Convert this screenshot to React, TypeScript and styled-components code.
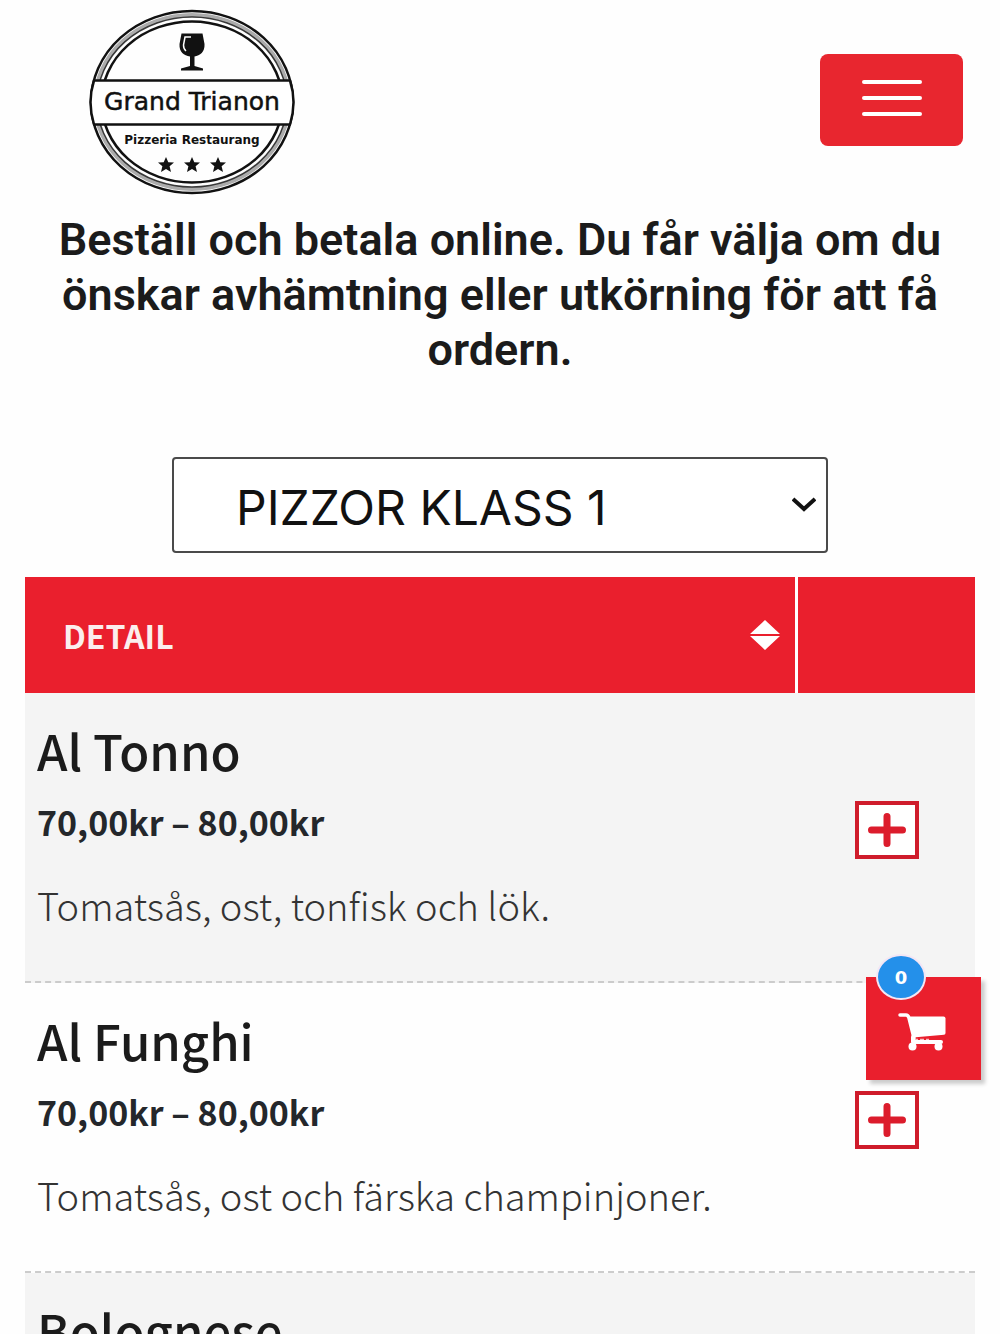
import React from "react";
import styled, { createGlobalStyle } from "styled-components";

const red = "#ea1f2d";
const sourceSans = `"Noto Sans CJK JP", "Noto Sans", sans-serif`;

const GlobalStyle = createGlobalStyle`
  *, *::before, *::after { box-sizing: border-box; }
  body {
    margin: 0;
    background: #fefefe;
    color: #1b1b1b;
    font-family: ${sourceSans};
  }
`;

const Page = styled.div`
  height: 100vh;
  overflow: hidden;
`;

const Header = styled.header`
  display: flex;
  align-items: center;
  justify-content: space-between;
  padding: 8px 37px 8px 88px;
`;

const LogoLink = styled.a`
  display: block;
  line-height: 0;
  color: #111;
`;

const MenuButton = styled.button`
  display: flex;
  flex-direction: column;
  align-items: center;
  justify-content: center;
  gap: 12px;
  width: 143px;
  height: 92px;
  margin-bottom: 4px;
  padding: 0 0 4px;
  border: 0;
  border-radius: 8px;
  background: #e8262f;
  cursor: pointer;
`;

const MenuBar = styled.span`
  width: 60px;
  height: 4px;
  border-radius: 2px;
  background: #fff;
`;

const Intro = styled.h1`
  margin: 8px 0 80px;
  padding: 0 48px;
  font-family: Roboto, sans-serif;
  font-size: 45px;
  font-weight: 600;
  line-height: 55px;
  text-align: center;
`;

const CategoryField = styled.div`
  position: relative;
  width: 656px;
  max-width: 90%;
  margin: 0 auto 24px;
`;

const CategorySelect = styled.select`
  display: block;
  appearance: none;
  width: 100%;
  height: 96px;
  padding: 4px 60px 0 62px;
  border: 2px solid #4a4a4a;
  border-radius: 4px;
  background: #fff;
  color: #111;
  font-family: Inter, sans-serif;
  font-size: 48px;
`;

const Chevron = styled.svg`
  position: absolute;
  right: 12px;
  top: 50%;
  margin-top: -8px;
  pointer-events: none;
`;

const MenuTable = styled.table`
  width: 95%;
  margin: 0 auto;
  border-collapse: separate;
  border-spacing: 0;
  table-layout: fixed;
`;

const HeadCell = styled.th<{ $action?: boolean }>`
  width: ${(p) => (p.$action ? "19%" : "auto")};
  height: 116px;
  padding: 0 14px 0 38px;
  border-left: ${(p) => (p.$action ? "3px solid #fff" : "0")};
  background: ${red};
  color: #fbeeee;
  font-size: 32px;
  font-weight: 700;
  text-align: left;
`;

const SortButton = styled.button`
  display: flex;
  align-items: center;
  justify-content: space-between;
  width: 100%;
  padding: 0;
  border: 0;
  background: none;
  color: inherit;
  font: inherit;
  cursor: pointer;
`;

const DishRow = styled.tr`
  &:nth-child(odd) { background: #f4f4f4; }
`;

const DishCell = styled.td`
  height: 290px;
  padding: 21px 12px 32px;
  border-bottom: 2px dashed #ccc;
  vertical-align: top;
`;

const ActionCell = styled(DishCell)`
  padding: 108px 0 0 4px;
  text-align: center;
`;

const DishName = styled.h2`
  margin: 0 0 8px;
  font-size: 49px;
  font-weight: 500;
  line-height: 72px;
`;

const Price = styled.p`
  margin: 0 0 28px;
  color: #24272b;
  font-size: 34px;
  font-weight: 700;
  line-height: 55px;
`;

const Description = styled.p`
  margin: 0;
  color: #333;
  font-size: 38px;
  font-weight: 300;
  line-height: 55px;
`;

const AddButton = styled.button`
  display: inline-flex;
  align-items: center;
  justify-content: center;
  width: 64px;
  height: 58px;
  padding: 0;
  border: 4px solid #cf1c2b;
  background: #fff;
  cursor: pointer;
`;

const CartButton = styled.button`
  position: fixed;
  right: 19px;
  bottom: 254px;
  display: flex;
  align-items: center;
  justify-content: center;
  width: 115px;
  height: 103px;
  padding: 4px 3px 0 0;
  border: 0;
  background: ${red};
  box-shadow: 4px 4px 4px rgba(0, 0, 0, 0.2);
  cursor: pointer;
`;

const CartCount = styled.span`
  position: absolute;
  left: 10px;
  top: -23px;
  display: flex;
  align-items: center;
  justify-content: center;
  width: 50px;
  height: 46px;
  border: 2px solid #f3e6f5;
  border-radius: 50%;
  background: #2490ea;
  color: #fff;
  font-family: "DejaVu Sans", sans-serif;
  font-size: 18px;
  font-weight: 700;
`;

const Star = ({ x }: { x: number }) => (
  <path
    transform={`translate(${x} 165)`}
    d="M0-8 2.3-2.8 8-2.5 3.6 1.3 5 7 0 3.9-5 7-3.6 1.3-8-2.5-2.3-2.8Z"
    fill="currentColor"
  />
);

const Logo = () => (
  <svg width="208" height="188" viewBox="88 8 208 188" role="img" aria-label="Grand Trianon">
    <g fill="none" stroke="currentColor">
      <ellipse cx="192" cy="102" rx="101" ry="91" strokeWidth="2.500" />
      <ellipse cx="192" cy="102" rx="97" ry="87" strokeWidth="4" strokeOpacity="0.350" />
      <ellipse cx="192" cy="102" rx="95" ry="85" strokeWidth="1.500" strokeOpacity="0.800" />
      <ellipse cx="192" cy="102" rx="90.500" ry="80.500" strokeWidth="2.500" />
    </g>
    <path d="M94 80.500H290Q297 102 290 124.500H94Q87 102 94 80.500Z" fill="#fff" stroke="currentColor" strokeWidth="2.500" />
    <path
      d="M181.500 33.500H202.500L204.500 44C205 52 200 55.500 194.500 56.500V66L203 68.500V70.500H181V68.500L190 66V56.500C184 55.500 179 52 179.500 44Z"
      fill="currentColor"
    />
    <path d="M191 37H185L183.500 45Q183.500 49 186 51" fill="none" stroke="#fff" strokeWidth="1.500" />
    <g fill="currentColor" textAnchor="middle" fontFamily="DejaVu Sans, sans-serif">
      <text x="192" y="110" fontSize="25" stroke="currentColor" strokeWidth="0.500">Grand Trianon</text>
      <text x="192" y="144" fontSize="12" fontWeight="700">Pizzeria Restaurang</text>
    </g>
    <Star x={166} />
    <Star x={192} />
    <Star x={218} />
  </svg>
);

const SortIcon = () => (
  <svg width="32" height="30" viewBox="0 0 32 30" fill="#fff" aria-hidden="true">
    <path d="M16 0 31 14H1ZM1 16H31L16 30Z" />
  </svg>
);

const PlusIcon = () => (
  <svg width="40" height="36" viewBox="0 0 40 36" stroke="#dc1c2c" strokeWidth="7" strokeLinecap="round" strokeLinejoin="round" aria-hidden="true">
    <path d="M4.500 18H35.500M20 4.500V31.500" />
  </svg>
);

const CartIcon = () => (
  <svg width="48" height="40" viewBox="0 0 48 40" fill="none" stroke="#fff" aria-hidden="true">
    <path d="M2 4H8Q10 4 11 7L16 27" strokeWidth="3.500" strokeLinecap="round" />
    <path d="M11 5.500H45.500Q47.500 5.500 47.500 7.500V22Q47.500 23.500 46 23.700L15 26.500Z" fill="#fff" stroke="none" />
    <path d="M15 26V31H43" strokeWidth="4" strokeLinejoin="round" strokeLinecap="round" />
    <path d="M16 28.500H31" strokeWidth="1.500" strokeDasharray="4 2" strokeOpacity="0.700" />
    <circle cx="14.500" cy="35.500" r="4" fill="#fff" stroke="none" />
    <circle cx="40.500" cy="35.500" r="4" fill="#fff" stroke="none" />
  </svg>
);

interface Dish {
  name: string;
  price?: string;
  description?: string;
}

const dishes: Dish[] = [
  { name: "Al Tonno", price: "70,00kr – 80,00kr", description: "Tomatsås, ost, tonfisk och lök." },
  { name: "Al Funghi", price: "70,00kr – 80,00kr", description: "Tomatsås, ost och färska champinjoner." },
  { name: "Bolognese" },
];

export default function App() {
  return (
    <Page>
      <GlobalStyle />
      <Header>
        <LogoLink href="#"><Logo /></LogoLink>
        <MenuButton type="button" aria-label="Meny">
          <MenuBar /><MenuBar /><MenuBar />
        </MenuButton>
      </Header>
      <main>
        <Intro>Beställ och betala online. Du får välja om du önskar avhämtning eller utkörning för att få ordern.</Intro>
        <CategoryField>
          <CategorySelect aria-label="Kategori">
            <option>PIZZOR KLASS 1</option>
          </CategorySelect>
          <Chevron width="24" height="16" viewBox="0 0 24 16" fill="none" stroke="#111" strokeWidth="4" aria-hidden="true">
            <path d="M1 2 12 12 23 2" />
          </Chevron>
        </CategoryField>
        <MenuTable>
          <thead>
            <tr>
              <HeadCell scope="col">
                <SortButton type="button">DETAIL<SortIcon /></SortButton>
              </HeadCell>
              <HeadCell scope="col" $action aria-label="Lägg till" />
            </tr>
          </thead>
          <tbody>
            {dishes.map((dish) => (
              <DishRow key={dish.name}>
                <DishCell>
                  <DishName>{dish.name}</DishName>
                  {dish.price && <Price>{dish.price}</Price>}
                  {dish.description && <Description>{dish.description}</Description>}
                </DishCell>
                <ActionCell>
                  <AddButton type="button" aria-label={`Lägg till ${dish.name}`}><PlusIcon /></AddButton>
                </ActionCell>
              </DishRow>
            ))}
          </tbody>
        </MenuTable>
      </main>
      <CartButton type="button" aria-label="Varukorg">
        <CartIcon />
        <CartCount>0</CartCount>
      </CartButton>
    </Page>
  );
}
